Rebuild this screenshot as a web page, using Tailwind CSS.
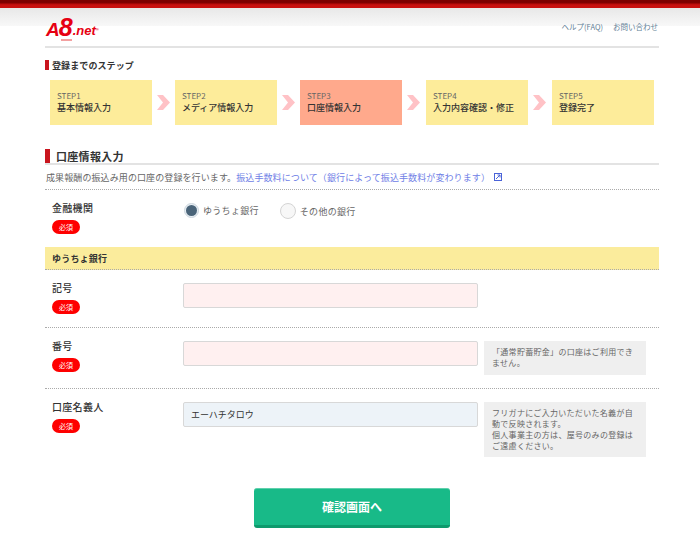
<!DOCTYPE html>
<html lang="ja">

<head>
    <meta charset="UTF-8">
    <meta name="viewport" content="width=device-width, initial-scale=1.0">
    <title>口座情報入力 | A8.net</title>
    <script src="https://cdn.jsdelivr.net/npm/@tailwindcss/browser@4"></script>
</head>

<body class="bg-white text-[#333] font-['Noto_Sans_CJK_JP','Noto_Sans',sans-serif] w-[700px] h-[541px] overflow-hidden">
    <!-- Top bar -->
    <div class="h-[8px] bg-gradient-to-b from-[#7d0000] from-30% to-[#c9100f] to-60%"></div>
    <div class="h-[18px] bg-gradient-to-b from-[#e8e8e8] to-[#f8f8f8]"></div>

    <div class="ml-[45px] w-[614px]">
        <!-- Header -->
        <header class="h-[20px] border-b-2 border-[#e3e3e3] box-content relative flex justify-end">
            <a class="absolute left-[1px] top-[-11px] flex items-end italic font-bold text-[#e60012] font-['Liberation_Sans',sans-serif] leading-none">
                <span class="text-[19px]">A</span><span class="text-[25px] leading-[24px] ml-[-1px]">8</span><span class="text-[13px] leading-[17px]">.net</span><span class="text-[4px] leading-[19px]">®</span>
                <span class="absolute left-[15px] top-[24px] w-[11px] h-[2px] bg-[#f3a0a0]"></span>
            </a>
            <nav class="flex gap-[10px] text-[7.500px] leading-none text-[#5f8096] pr-[1px] mt-[-3px] pt-[0px]">
                <a>ヘルプ(FAQ)</a>
                <a>お問い合わせ</a>
            </nav>
        </header>

        <!-- Steps -->
        <div class="mt-[12px] h-[10px] flex items-center border-l-[4px] border-[#c9151e] pl-[3px]">
            <h2 class="text-[9px] font-bold leading-none tracking-[0.1px]">登録までのステップ</h2>
        </div>
        <ol class="mt-[10px] ml-[5px] flex items-center">
            <li class="w-[102px] h-[45px] bg-[#fdec9a] pl-[7px] pt-[12px] leading-none">
                <p class="text-[8px] text-[#666]">STEP1</p>
                <p class="text-[9px] font-medium mt-[3px]">基本情報入力</p>
            </li>
            <svg class="mx-[5px]" width="13" height="15" viewBox="0 0 13 15"><path d="M0 0h6l7 7.500-7 7.500H0l6-7.500z" fill="#ffc2c6"/></svg>
            <li class="w-[102px] h-[45px] bg-[#fdec9a] pl-[7px] pt-[12px] leading-none">
                <p class="text-[8px] text-[#666]">STEP2</p>
                <p class="text-[9px] font-medium mt-[3px]">メディア情報入力</p>
            </li>
            <svg class="mx-[5px]" width="13" height="15" viewBox="0 0 13 15"><path d="M0 0h6l7 7.500-7 7.500H0l6-7.500z" fill="#ffc2c6"/></svg>
            <li class="w-[102px] h-[45px] bg-[#ffa98c] pl-[7px] pt-[12px] leading-none">
                <p class="text-[8px] text-[#666]">STEP3</p>
                <p class="text-[9px] font-medium mt-[3px]">口座情報入力</p>
            </li>
            <svg class="ml-[5px] mr-[6px]" width="13" height="15" viewBox="0 0 13 15"><path d="M0 0h6l7 7.500-7 7.500H0l6-7.500z" fill="#ffc2c6"/></svg>
            <li class="w-[102px] h-[45px] bg-[#fdec9a] pl-[7px] pt-[12px] leading-none">
                <p class="text-[8px] text-[#666]">STEP4</p>
                <p class="text-[9px] font-medium mt-[3px]">入力内容確認・修正</p>
            </li>
            <svg class="ml-[5px] mr-[6px]" width="13" height="15" viewBox="0 0 13 15"><path d="M0 0h6l7 7.500-7 7.500H0l6-7.500z" fill="#ffc2c6"/></svg>
            <li class="w-[102px] h-[45px] bg-[#fdec9a] pl-[7px] pt-[12px] leading-none">
                <p class="text-[8px] text-[#666]">STEP5</p>
                <p class="text-[9px] font-medium mt-[3px]">登録完了</p>
            </li>
        </ol>

        <!-- Section heading -->
        <div class="mt-[24px] h-[14px] flex items-center border-b-2 border-[#e3e3e3] box-content">
            <span class="w-[5px] h-[14px] bg-[#c9151e]"></span>
            <h1 class="ml-[6px] text-[11px] font-bold leading-none tracking-[0.3px]">口座情報入力</h1>
        </div>
        <p class="h-[24px] flex items-center text-[9px] leading-none pl-[1px] tracking-[0.1px] text-[#666] border-b border-dotted border-[#aaa] box-content">
            成果報酬の振込み用の口座の登録を行います。<a class="text-[#6f80e6]">振込手数料について（銀行によって振込手数料が変わります）</a>
            <svg class="ml-[4px]" width="8" height="8" viewBox="0 0 8 8" fill="none"><rect x=".5" y=".5" width="7" height="7" stroke="#4a63d8"/><path d="M2 6l4-4M3.500 2H6v2.500" stroke="#4a63d8"/></svg>
        </p>

        <!-- 金融機関 -->
        <div class="h-[57px] flex">
            <div class="w-[138px] pl-[7px] pt-[13px]">
                <p class="text-[10px] font-medium leading-none tracking-[0.3px]">金融機関</p>
                <span class="mt-[7px] w-[28px] h-[14px] rounded-full bg-[#fe0000] text-white text-[7px] leading-none flex items-center justify-center">必須</span>
            </div>
            <div class="pt-[13px] flex items-start text-[9px] leading-none text-[#666] tracking-[0.3px]">
                <label class="flex items-center ml-[1px]">
                    <span class="w-[15px] h-[15px] rounded-full border border-[#ccd6de] bg-[#e9eff4] flex items-center justify-center"><span class="w-[11px] h-[11px] rounded-full bg-[#4a6479]"></span></span>
                    <span class="ml-[4px]">ゆうちょ銀行</span>
                </label>
                <label class="flex items-center ml-[21px]">
                    <span class="w-[16px] h-[16px] rounded-full border border-[#d4d4d4] bg-[#f7f7f7]"></span>
                    <span class="ml-[4px]">その他の銀行</span>
                </label>
            </div>
        </div>

        <!-- Yellow band -->
        <div class="h-[22px] bg-[#fbec9c] border-b border-dotted border-[#aaa] box-content pl-[7px] flex items-center text-[9px] font-bold leading-none tracking-[0.2px]">ゆうちょ銀行</div>

        <!-- 記号 -->
        <div class="h-[57px] flex border-b border-dotted border-[#aaa] box-content">
            <div class="w-[138px] pl-[7px] pt-[13px]">
                <p class="text-[10px] font-medium leading-none tracking-[0.3px]">記号</p>
                <span class="mt-[7px] w-[28px] h-[14px] rounded-full bg-[#fe0000] text-white text-[7px] leading-none flex items-center justify-center">必須</span>
            </div>
            <input type="text" class="mt-[13px] w-[295px] h-[25px] rounded-[2px] border border-[#d8d8d8] bg-[#fff0f0]">
        </div>

        <!-- 番号 -->
        <div class="h-[60px] flex border-b border-dotted border-[#aaa] box-content">
            <div class="w-[138px] pl-[7px] pt-[13px]">
                <p class="text-[10px] font-medium leading-none tracking-[0.3px]">番号</p>
                <span class="mt-[7px] w-[28px] h-[14px] rounded-full bg-[#fe0000] text-white text-[7px] leading-none flex items-center justify-center">必須</span>
            </div>
            <input type="text" class="mt-[13px] w-[295px] h-[25px] rounded-[2px] border border-[#d8d8d8] bg-[#fff0f0]">
            <p class="mt-[13px] ml-[6px] w-[162px] h-[34px] bg-[#efefef] pl-[8px] pr-[6px] pt-[5px] text-[8px] leading-[11px] text-[#666] tracking-[0.3px]">「通常貯蓄貯金」の口座はご利用できません。</p>
        </div>

        <!-- 口座名義人 -->
        <div class="flex">
            <div class="w-[138px] pl-[7px] pt-[13px]">
                <p class="text-[10px] font-medium leading-none tracking-[0.3px]">口座名義人</p>
                <span class="mt-[7px] w-[28px] h-[14px] rounded-full bg-[#fe0000] text-white text-[7px] leading-none flex items-center justify-center">必須</span>
            </div>
            <input type="text" value="エーハチタロウ" class="mt-[13px] w-[295px] h-[25px] rounded-[2px] border border-[#d8d8d8] bg-[#edf3f8] px-[7px] text-[9px] text-[#333] outline-none">
            <p class="mt-[13px] ml-[6px] w-[162px] h-[55px] bg-[#efefef] pl-[8px] pr-[6px] pt-[5px] text-[8px] leading-[11px] text-[#666] tracking-[0.3px]">フリガナにご入力いただいた名義が自動で反映されます。<br>個人事業主の方は、屋号のみの登録はご遠慮ください。</p>
        </div>

        <!-- Submit -->
        <button class="mt-[31px] ml-[209px] block w-[196px] h-[40px] rounded-[3px] bg-[#18ba88] border-t border-t-[#5fd0ac] border-b-[3px] border-b-[#0e9a6d] text-white text-[12px] font-bold leading-none">確認画面へ</button>
    </div>
</body>

</html>
